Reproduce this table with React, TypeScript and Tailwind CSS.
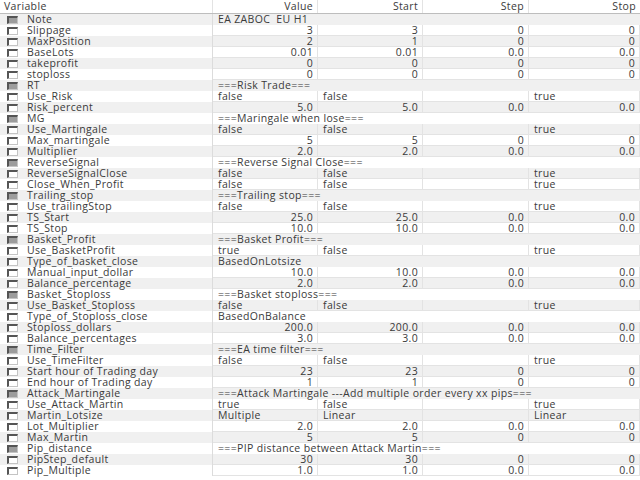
// section rows / notes hold a single string that spans the value columns
const rows: { name: string; section?: boolean; cells: string[] }[] = [
  { name: "Note", section: true, cells: ["EA ZABOC  EU H1"] },
  { name: "Slippage", cells: ["3", "3", "0", "0"] },
  { name: "MaxPosition", cells: ["2", "1", "0", "0"] },
  { name: "BaseLots", cells: ["0.01", "0.01", "0.0", "0.0"] },
  { name: "takeprofit", cells: ["0", "0", "0", "0"] },
  { name: "stoploss", cells: ["0", "0", "0", "0"] },
  { name: "RT", section: true, cells: ["===Risk Trade==="] },
  { name: "Use_Risk", cells: ["false", "false", "", "true"] },
  { name: "Risk_percent", cells: ["5.0", "5.0", "0.0", "0.0"] },
  { name: "MG", section: true, cells: ["===Maringale when lose==="] },
  { name: "Use_Martingale", cells: ["false", "false", "", "true"] },
  { name: "Max_martingale", cells: ["5", "5", "0", "0"] },
  { name: "Multiplier", cells: ["2.0", "2.0", "0.0", "0.0"] },
  { name: "ReverseSignal", section: true, cells: ["===Reverse Signal Close==="] },
  { name: "ReverseSignalClose", cells: ["false", "false", "", "true"] },
  { name: "Close_When_Profit", cells: ["false", "false", "", "true"] },
  { name: "Trailing_stop", section: true, cells: ["===Trailing stop==="] },
  { name: "Use_trailingStop", cells: ["false", "false", "", "true"] },
  { name: "TS_Start", cells: ["25.0", "25.0", "0.0", "0.0"] },
  { name: "TS_Stop", cells: ["10.0", "10.0", "0.0", "0.0"] },
  { name: "Basket_Profit", section: true, cells: ["===Basket Profit==="] },
  { name: "Use_BasketProfit", cells: ["true", "false", "", "true"] },
  { name: "Type_of_basket_close", cells: ["BasedOnLotsize"] },
  { name: "Manual_input_dollar", cells: ["10.0", "10.0", "0.0", "0.0"] },
  { name: "Balance_percentage", cells: ["2.0", "2.0", "0.0", "0.0"] },
  { name: "Basket_Stoploss", section: true, cells: ["===Basket stoploss==="] },
  { name: "Use_Basket_Stoploss", cells: ["false", "false", "", "true"] },
  { name: "Type_of_Stoploss_close", cells: ["BasedOnBalance"] },
  { name: "Stoploss_dollars", cells: ["200.0", "200.0", "0.0", "0.0"] },
  { name: "Balance_percentages", cells: ["3.0", "3.0", "0.0", "0.0"] },
  { name: "Time_Filter", section: true, cells: ["===EA time filter==="] },
  { name: "Use_TimeFilter", cells: ["false", "false", "", "true"] },
  { name: "Start hour of Trading day", cells: ["23", "23", "0", "0"] },
  { name: "End hour of Trading day", cells: ["1", "1", "0", "0"] },
  { name: "Attack_Martingale", section: true, cells: ["===Attack Martingale ---Add multiple order every xx pips==="] },
  { name: "Use_Attack_Martin", cells: ["true", "false", "", "true"] },
  { name: "Martin_Lotsize", cells: ["Multiple", "Linear", "", "Linear"] },
  { name: "Lot_Multiplier", cells: ["2.0", "2.0", "0.0", "0.0"] },
  { name: "Max_Martin", cells: ["5", "5", "0", "0"] },
  { name: "Pip_distance", section: true, cells: ["===PIP distance between Attack Martin==="] },
  { name: "PipStep_default", cells: ["30", "30", "0", "0"] },
  { name: "Pip_Multiple", cells: ["1.0", "1.0", "0.0", "0.0"] },
];

const isNum = (s: string) => /^[0-9.]+$/.test(s);

const Check = ({ filled }: { filled?: boolean }) => (
  <span
    className={`inline-block shrink-0 w-[11px] h-[8px] border-t-2 border-l-2 border-r border-b border-t-[#555] border-l-[#555] border-r-[#c4c4c4] border-b-[#c4c4c4] ${
      filled ? "bg-[#9c9c9c]" : "bg-white"
    }`}
  />
);

const grid = "grid grid-cols-[213px_105px_105px_106px_111px]";

export default function App() {
  return (
    <div
      className="w-[640px] h-[480px] bg-white overflow-hidden text-[10.5px] tracking-[0.35px] text-[#3a3a3a]"
      style={{ fontFamily: '"Open Sans", "Noto Sans", sans-serif' }}
    >
      <div className={`${grid} h-[14px] leading-[13px] border-b border-[#bdbdbd]`}>
        <div className="pl-1 border-r border-[#e3e3e3]">Variable</div>
        <div className="pr-1 text-right border-r border-[#e3e3e3]">Value</div>
        <div className="pr-1 text-right border-r border-[#e3e3e3]">Start</div>
        <div className="pr-1 text-right border-r border-[#e3e3e3]">Step</div>
        <div className="pr-1 text-right">Stop</div>
      </div>
      {rows.map((r, i) => (
        <div
          key={r.name}
          className={`${grid} h-[11px] leading-[10px] ${i % 2 === 0 ? "bg-[#f0f0f0]" : "bg-white"}`}
        >
          <div className="flex items-start gap-[9px] pl-[7px] border-r border-[#dcdcdc] whitespace-nowrap">
            <span className="mt-[1px]">
              <Check filled={r.section} />
            </span>
            <span>{r.name}</span>
          </div>
          {r.cells.length === 1 ? (
            <div className="col-span-4 pl-[5px] whitespace-pre">{r.cells[0]}</div>
          ) : (
            r.cells.map((c, j) => (
              <div
                key={j}
                className={`border-b border-r border-[#e3e3e3] whitespace-nowrap ${
                  isNum(c) ? "text-right pr-1" : "pl-[5px]"
                }`}
              >
                {c}
              </div>
            ))
          )}
        </div>
      ))}
    </div>
  );
}
